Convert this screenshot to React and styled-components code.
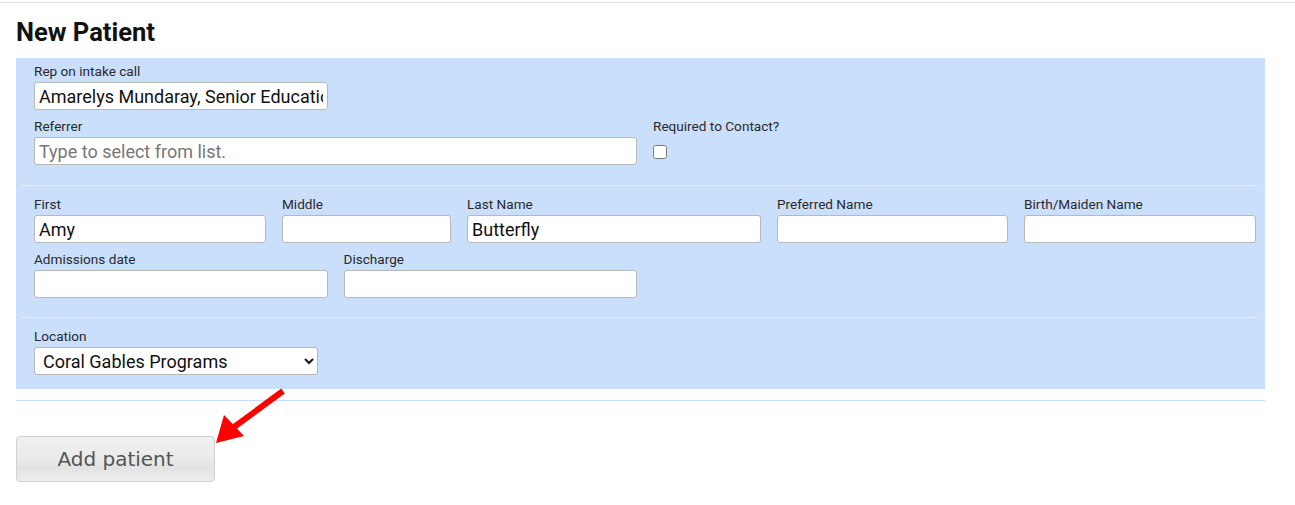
import React from 'react'
import styled, {createGlobalStyle} from 'styled-components'

const GlobalStyle = createGlobalStyle`
  html, body {
    margin: 0;
    padding: 0;
    background: #fff;
    font-family: Roboto, "Liberation Sans", sans-serif;
    color: #222;
  }
`

export const Page = styled.div`
  position: relative;
  border-top: 1px solid #e3e3e3;
  margin-top: 2px;
  padding: 14px 30px 20px 16px;
`

export const Title = styled.h1`
  margin: 0 0 11px;
  font-size: 25.5px;
  line-height: 30px;
  font-weight: 700;
  color: #111;
`

export const Panel = styled.div`
  background: #cadffc;
  padding: 5px 7px 14px 5px;
`

export const Section = styled.div`
  padding: ${({first}) => (first ? '0' : '10px')} 2px ${({pb}) => pb || '0'} 13px;
  border-bottom: ${({last}) => (last ? 'none' : '1px solid #e6effd')};
  display: flex;
  flex-direction: column;
  gap: 8px;
`

export const Row = styled.div`
  display: grid;
  grid-template-columns: ${({cols}) => cols};
  column-gap: 16px;
`

export const Field = styled.div`
  display: flex;
  flex-direction: column;
  grid-column: ${({span}) => span || 'auto'};
  min-width: 0;
`

export const Label = styled.label`
  font-size: 13.6px;
  line-height: 16px;
  color: #2a2a2a;
  margin-bottom: 3px;
`

export const Input = styled.input`
  box-sizing: border-box;
  width: 100%;
  height: 28px;
  margin: 0;
  padding: 0 4px;
  border: 1px solid #b8b8b8;
  border-radius: 3px;
  background: #fff;
  font-family: Roboto, "Liberation Sans", sans-serif;
  font-size: 18px;
  color: #111;
  outline: none;

  &::placeholder {
    color: #777;
  }
`

export const Check = styled.input`
  width: 14px;
  height: 14px;
  margin: 8px 0 0 0;
`

export const Select = styled.select`
  box-sizing: border-box;
  width: 100%;
  height: 28px;
  margin: 0;
  padding: 0 4px;
  border: 1px solid #b8b8b8;
  border-radius: 3px;
  background: #fff;
  font-family: Roboto, "Liberation Sans", sans-serif;
  font-size: 18px;
  color: #111;
`

export const Rule = styled.div`
  height: 1px;
  background: #c6dcfb;
  margin: 11px 0 35px;
`

export const AddButton = styled.button`
  width: 199px;
  height: 46px;
  border: 1px solid #d2d2d2;
  border-radius: 4px;
  background: linear-gradient(#f1f1f1 0%, #ebebeb 45%, #e3e3e3 70%, #ededed 100%);
  font-family: "DejaVu Sans", Verdana, sans-serif;
  font-size: 20px;
  color: #555;
  cursor: pointer;
`

const Arrow = styled.svg`
  position: absolute;
  left: 0;
  top: 0;
  pointer-events: none;
`

export default function App() {
  return (
    <>
      <GlobalStyle />
      <Page>
        <Title>New Patient</Title>
        <Panel>
          <Section first pb="20px">
            <Row cols="repeat(12, 1fr)">
              <Field span="span 3">
                <Label>Rep on intake call</Label>
                <Input defaultValue="Amarelys Mundaray, Senior Education Consultant" />
              </Field>
            </Row>
            <Row cols="repeat(12, 1fr)">
              <Field span="span 6">
                <Label>Referrer</Label>
                <Input placeholder="Type to select from list." />
              </Field>
              <Field span="span 3">
                <Label>Required to Contact?</Label>
                <Check type="checkbox" />
              </Field>
            </Row>
          </Section>
          <Section pb="19px">
            <Row cols="232fr 169fr 294fr 231fr 232fr">
              <Field>
                <Label>First</Label>
                <Input defaultValue="Amy" />
              </Field>
              <Field>
                <Label>Middle</Label>
                <Input />
              </Field>
              <Field>
                <Label>Last Name</Label>
                <Input defaultValue="Butterfly" />
              </Field>
              <Field>
                <Label>Preferred Name</Label>
                <Input />
              </Field>
              <Field>
                <Label>Birth/Maiden Name</Label>
                <Input />
              </Field>
            </Row>
            <Row cols="repeat(12, 1fr)">
              <Field span="span 3">
                <Label>Admissions date</Label>
                <Input />
              </Field>
              <Field span="span 3">
                <Label>Discharge</Label>
                <Input />
              </Field>
            </Row>
          </Section>
          <Section last>
            <Row cols="284px">
              <Field>
                <Label>Location</Label>
                <Select defaultValue="coral">
                  <option value="coral">Coral Gables Programs</option>
                </Select>
              </Field>
            </Row>
          </Section>
        </Panel>
        <Rule />
        <AddButton>Add patient</AddButton>
        <Arrow width="300" height="460">
          <line x1="283" y1="388" x2="230" y2="427" stroke="#ff0000" strokeWidth="6" />
          <polygon points="216,440 224,412 244,433" fill="#ff0000" />
        </Arrow>
      </Page>
    </>
  )
}
